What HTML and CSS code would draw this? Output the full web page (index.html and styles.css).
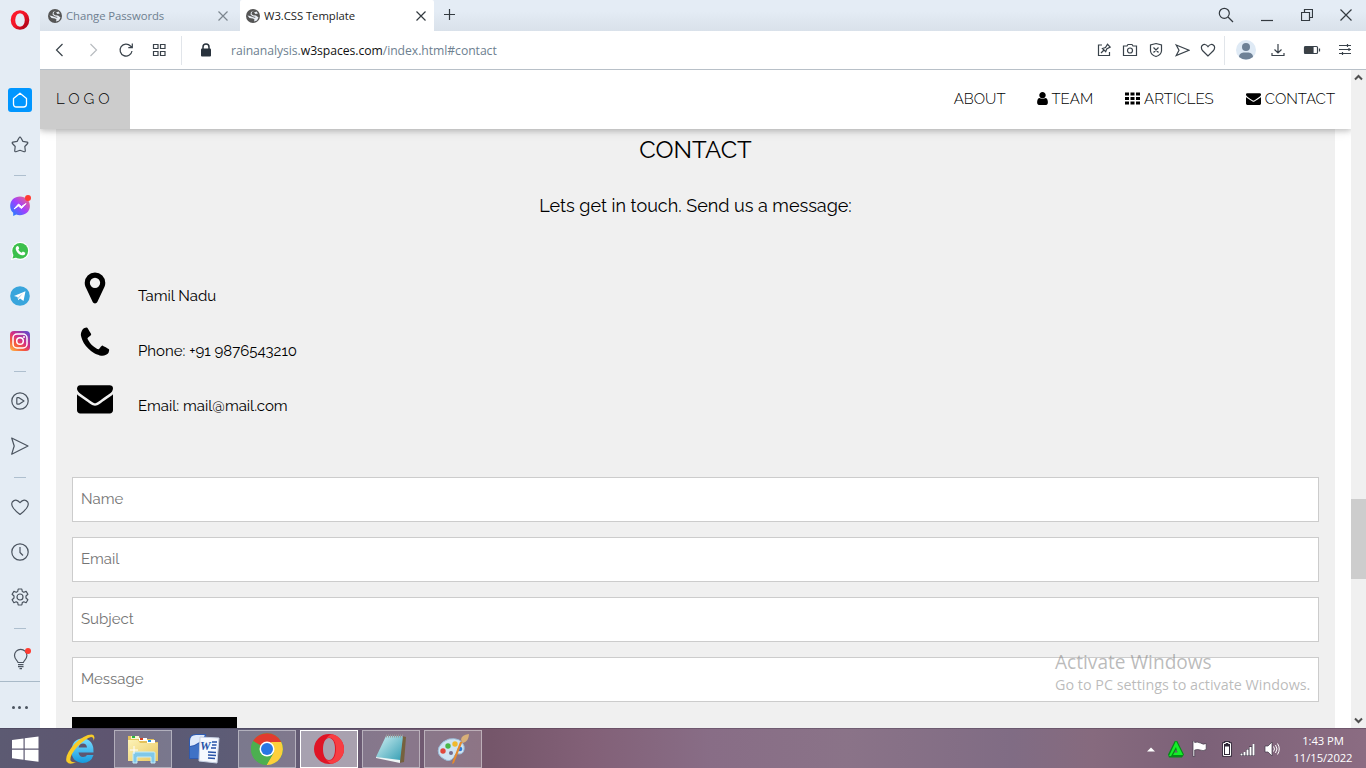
FILE: index.html
```html
<!DOCTYPE html>
<html lang="en">
<head>
<meta charset="utf-8">
<title>W3.CSS Template</title>
<link rel="stylesheet" href="styles.css">
</head>
<body>
<svg class="defs" width="0" height="0">
  <defs>
    <linearGradient id="opera" x1="0" x2="1" y1="0" y2="1"><stop offset="0" stop-color="#ff1b2d"/><stop offset=".5" stop-color="#f01426"/><stop offset="1" stop-color="#a70014"/></linearGradient>
    <linearGradient id="msg" x1="0" x2="1" y1="1" y2="0"><stop offset="0" stop-color="#0a8cff"/><stop offset=".5" stop-color="#a040ff"/><stop offset="1" stop-color="#ff6a70"/></linearGradient>
    <linearGradient id="insta" x1="0" x2=".8" y1="1" y2="0"><stop offset="0" stop-color="#ffc14a"/><stop offset=".35" stop-color="#f65a3c"/><stop offset=".6" stop-color="#d42e84"/><stop offset="1" stop-color="#6a48c8"/></linearGradient>
    <linearGradient id="ie" x1="0" x2="0" y1="0" y2="1"><stop offset="0" stop-color="#7bdcff"/><stop offset="1" stop-color="#149ade"/></linearGradient>
    <linearGradient id="folder" x1="0" x2="1" y1="0" y2="1"><stop offset="0" stop-color="#fdf3b8"/><stop offset="1" stop-color="#e9c860"/></linearGradient>
    <linearGradient id="note" x1="0" x2="1" y1="0" y2="1"><stop offset="0" stop-color="#d3f2f4"/><stop offset="1" stop-color="#2e9ab0"/></linearGradient>
    <symbol id="globe" viewBox="0 0 14 14"><circle cx="7" cy="7" r="7" fill="#555"/><path d="M8.500 1.500 6 3 5.500 5 7 6.300 10 6.500 12.500 8.500 11 11.500 8 12.500 8.500 10.500 7 9.500 3.500 9 1.500 6.500 4 7 6.500 8 9 8.800 9.500 8 6.500 7.200 4.500 5.500 5 3Z" fill="#e8edf4"/><path d="M8 3.500 10.500 2.500 12 4.500 9.500 5Z" fill="#e8edf4"/></symbol>
    <symbol id="envelope" viewBox="0 0 1792 1792"><path d="M1792 710v794q0 66-47 113t-113 47h-1472q-66 0-113-47t-47-113v-794q44 49 101 87 362 246 497 345 57 42 92.500 65.500t94.500 48 110 24.500h2q51 0 110-24.500t94.500-48 92.500-65.500q170-123 498-345 57-39 100-87zm0-294q0 79-49 151t-122 123q-376 261-468 325-10 7-42.500 31t-54 38.500-52 32.500-57.500 27-50 9h-2q-23 0-50-9t-57.500-27-52-32.500-54-38.500-42.500-31q-91-64-262-182.500t-205-142.500q-62-42-117-115.500t-55-136.500q0-78 41.500-130t118.500-52h1472q65 0 112.500 47t47.500 113z"/></symbol>
  </defs>
</svg>
<div class="desktop">
  <div class="browser">
    <aside class="sidebar">
      <div class="brand"><svg width="20" height="20"><ellipse cx="10" cy="10" rx="7.800" ry="8.300" fill="none" stroke="url(#opera)" stroke-width="3"/><ellipse cx="10" cy="10" rx="5.800" ry="8" fill="none" stroke="url(#opera)" stroke-width="2"/></svg></div>
      <div class="item first"><span class="home"><svg width="24" height="24" fill="none" stroke="#fff" stroke-width="1.300" stroke-linejoin="round"><path d="M5.500 10.500 12 5.200l6.500 5.300V16q0 3-3 3h-7q-3 0-3-3Z"/></svg></span></div>
      <div class="item"><svg class="line" width="20" height="20"><path d="M10 2.200q.6 0 .9.600l2 3.600 4.200.8q1.200.3.500 1.300l-2.800 3 .5 4.300q0 1.200-1.200.9L10 15.300l-4.100 1.400q-1.200.3-1.200-.9l.5-4.300-2.800-3q-.7-1 .5-1.300l4.200-.8 2-3.600q.3-.6.9-.6Z"/></svg></div>
      <div class="rule short"></div>
      <div class="item"><svg width="22" height="22"><path d="M11 1.500C5.500 1.500 1.200 5.300 1.200 11c0 3 1.200 5.200 3 6.800V21l3-1.400c6.500 2 13.700-1.600 13.700-8.600 0-5.700-4.400-9.500-9.900-9.500Z" fill="url(#msg)"/><path d="m5 14 4.500-5 3 2.500L17 8.500l-4.500 5-3-2.500Z" fill="#fff" stroke="#fff"/></svg><i class="dot"></i></div>
      <div class="item"><svg width="20" height="20"><path d="M.8 19.200l1.600-5A9 9 0 1 1 6 17.800Z" fill="#fff"/><circle cx="10.200" cy="9.800" r="7.900" fill="#3cc04c"/><path d="M2.500 17.500l1.500-5 3.500 3.700Z" fill="#3cc04c"/><path d="M6.500 5.500q1.500-1.300 2.200.5l.5 1.500-.9 1.300q1.200 2.200 3.300 3l1.300-1.300 2.400 1.200q.4 2.200-2 2.600C9.500 14.500 5.400 10.500 5.700 7Z" fill="#fff"/></svg></div>
      <div class="item"><svg width="20" height="20"><circle cx="10" cy="10" r="9.800" fill="#38a5dc"/><path d="m4 10 11.500-4.700L13.500 15 10 12.600 8.200 14.300 7.500 11Z" fill="#fff"/><path d="m8 11.500 5-4.200-4 4.700-.6 1.800Z" fill="#a8c8dc"/></svg></div>
      <div class="item"><svg width="20" height="20"><rect width="20" height="20" rx="4" fill="url(#insta)"/><g fill="none" stroke="#fff" stroke-width="1.500"><rect x="3" y="3" width="14" height="14" rx="4"/><circle cx="10" cy="10" r="3.300"/></g><circle cx="14" cy="6" r="1" fill="#fff"/></svg></div>
      <div class="rule"></div>
      <div class="item"><svg class="line" width="20" height="20"><circle cx="10" cy="10" r="8.200"/><path d="M7.500 6.700H9L14 10l-5 3.200H7.500q-.7 0-.7-.7V7.400q0-.7.7-.7Z"/></svg></div>
      <div class="item"><svg class="line" width="20" height="20"><path d="M1.700 2 18 10 1.700 18.200 4.200 10Z"/></svg></div>
      <div class="rule"></div>
      <div class="item"><svg class="line" width="20" height="20"><path d="M10 17.400C8 16 5 13.500 3.300 11Q.8 7.500 2.300 5 5.700.8 10 5.700q4.300-4.900 7.700-.7 1.500 2.500-1 6C15 13.500 12 16 10 17.400Z"/></svg></div>
      <div class="item"><svg class="line" width="20" height="20"><circle cx="10" cy="10" r="8.200"/><path d="M10 5v5.500l3 3"/></svg></div>
      <div class="item"><svg class="line" width="20" height="20"><path d="M8.200 2h3.600l.5 2.500 1.500.8 2.300-.9L17.900 7.300 16 9v2l1.900 1.700-1.800 3-2.300-.9-1.500.8-.5 2.400H8.200l-.5-2.400-1.500-.8-2.300.9-1.800-3L4 11V9L2.100 7.300l1.800-2.900 2.300.9 1.500-.8Z"/><circle cx="10" cy="10" r="3"/></svg></div>
      <div class="rule"></div>
      <div class="item"><svg class="line bulb" width="20" height="22"><path d="M8 14.500C7.900 12.500 4.500 11.500 4.500 7.500a6.200 6.200 0 0 1 12.400 0c0 4-3.300 5-3.500 7ZM8 16.700h5.500M8 18.700h5.500M9.500 20.700h2.500"/></svg><i class="dot"></i></div>
      <div class="more"><i></i><i></i><i></i></div>
    </aside>

    <div class="window">
      <div class="tabs">
        <div class="tab"><svg width="14" height="14"><use href="#globe"/></svg><span>Change Passwords</span><svg class="close" width="10" height="10"><path d="m.5.500 9 9m0-9-9 9"/></svg></div>
        <div class="tab active"><svg width="14" height="14"><use href="#globe"/></svg><span>W3.CSS Template</span><svg class="close" width="10" height="10"><path d="m.5.500 9 9m0-9-9 9"/></svg></div>
        <svg class="plus" width="11" height="11"><path d="M5.500 0v11M0 5.500h11"/></svg>
        <div class="controls">
          <svg width="16" height="16"><circle cx="6.300" cy="6.300" r="5"/><path d="m10 10 5 5"/></svg>
          <svg width="12" height="14"><path d="M0 12.500h12"/></svg>
          <svg width="12" height="12"><path d="M.5 3.500h8v8h-8ZM3.500 3.500v-3h8v8h-3"/></svg>
          <svg width="12" height="12"><path d="m.5.500 11 11m0-11-11 11"/></svg>
        </div>
      </div>
      <div class="toolbar">
        <div class="navs">
          <svg width="16" height="16"><path d="m10.500 2-6 6 6 6"/></svg>
          <svg class="dim" width="16" height="16"><path d="m5.500 2 6 6-6 6"/></svg>
          <svg width="16" height="16"><path d="M14 9A6 6 0 1 1 12.500 4L14 5.500M14.300 1.500v4.200h-4"/></svg>
          <svg width="16" height="16"><path d="M2.500 2.500H7v4H2.500ZM9.500 2.500H14v4H9.500ZM2.500 9.500H7v4H2.500ZM9.500 9.500H14v4H9.500Z"/></svg>
        </div>
        <svg class="lock" width="12" height="14"><rect x="1" y="5.500" width="10" height="8" rx="1" fill="#28323c"/><path d="M3 6V4a3 3 0 0 1 6 0v2" fill="none" stroke="#28323c" stroke-width="1.500"/></svg>
        <div class="url">rainanalysis.<b>w3spaces.com</b>/index.html#contact</div>
        <div class="actions">
          <svg width="16" height="16"><path d="M6 3H2.500v10.500h11V10M5 11l3-3M6.500 6.500l3.200 3.200 1-2.700 3.500-2-2.700-2.700-2 3.300Z"/></svg>
          <svg width="16" height="16"><path d="M1.500 4H5l1-1.500h4L11 4h3.500v9.500h-13Z"/><circle cx="8" cy="8.500" r="2.500"/></svg>
          <svg width="16" height="16"><path d="M8 1.500 13.500 3v6Q13 13 8 14.500 3 13 2.500 9V3ZM5.500 5.500l5 5m0-5-5 5"/></svg>
          <svg width="16" height="16"><path d="M2.200 3 15 8.200 2.200 13.500 5 8.200Z"/></svg>
          <svg width="16" height="16"><path d="M8 14 2.700 8.800Q.5 6 2 3.700 5 .8 8 4.700q3-3.900 6-1 1.500 2.300-.7 5.100Z"/></svg>
        </div>
        <svg class="avatar" width="20" height="20"><circle cx="10" cy="10" r="10" fill="#dfeaf5"/><circle cx="10" cy="7" r="4" fill="#6e8196"/><path d="M3 17q0-4 4.500-4.500h5Q17 13 17 17q-7 5-14 0Z" fill="#6e8196"/></svg>
        <div class="tools">
          <svg width="16" height="16"><path d="M8 2v8.500M4.500 7.500 8 11l3.500-3.500M2 11v2.500h12V11"/></svg>
          <svg width="18" height="16"><rect x="1.500" y="4.500" width="13" height="7" rx="1"/><path d="M2 5h8v6H2Z" fill="#3c4043"/><path d="M16.500 6.500v3"/></svg>
          <svg width="14" height="14"><path d="M1 2.500h12M1 6.500h12M1 10.500h12M9.500 1v3M11 5v3M4.500 9v3"/></svg>
        </div>
      </div>

      <div class="viewport">
        <div class="page">
          <nav class="topbar">
            <a class="logo">LOGO</a>
            <div class="links">
              <a>ABOUT</a>
              <a><svg class="fa" width="11" height="15" viewBox="256 0 1280 1792"><path d="M1536 1399q0 109-62.500 187t-150.500 78h-854q-88 0-150.500-78t-62.500-187q0-85 8.500-160.500t31.500-152 58.500-131 94-89 134.500-34.500q131 128 313 128t313-128q76 0 134.500 34.500t94 89 58.500 131 31.500 152 8.500 160.500zm-256-887q0 159-112.500 271.500t-271.500 112.500-271.500-112.500-112.500-271.500 112.500-271.500 271.500-112.500 271.500 112.500 112.500 271.500z"/></svg><span>TEAM</span></a>
              <a><svg class="fa" width="15" height="15"><path d="M0 1.500h4v3H0ZM5.500 1.500h4v3h-4ZM11 1.500h4v3h-4ZM0 6h4v3H0ZM5.500 6h4v3h-4ZM11 6h4v3h-4ZM0 10.500h4v3H0ZM5.500 10.500h4v3h-4ZM11 10.500h4v3h-4Z"/></svg><span>ARTICLES</span></a>
              <a><svg class="fa" width="15" height="15"><use href="#envelope"/></svg><span>CONTACT</span></a>
            </div>
          </nav>
          <section class="contact">
            <h3>CONTACT</h3>
            <p class="lead">Lets get in touch. Send us a message:</p>
            <div class="info">
              <p><svg width="36" height="36" viewBox="0 0 1792 1792"><path d="M1152 640q0-106-75-181t-181-75-181 75-75 181 75 181 181 75 181-75 75-181zm256 0q0 109-33 179l-364 774q-16 33-47.500 52t-67.500 19-67.500-19-46.500-52l-365-774q-33-70-33-179 0-212 150-362t362-150 362 150 150 362z"/></svg><span>Tamil Nadu</span></p>
              <p><svg width="36" height="36" viewBox="0 0 1792 1792"><path d="M1600 1240q0 27-10 70.500t-21 68.500q-21 50-122 106-94 51-186 51-27 0-52.500-3.500t-57.500-12.500-47.500-14.500-55.500-20.500-49-18q-98-35-175-83-128-79-264.500-215.500t-215.500-264.500q-48-77-83-175-3-9-18-49t-20.500-55.500-14.500-47.500-12.500-57.500-3.500-52.500q0-92 51-186 56-101 106-122 25-11 68.500-21t70.500-10q14 0 21 3 18 6 53 76 11 19 30 54t35 63.500 31 53.500q3 4 17.500 25t21.500 35.500 7 28.500q0 20-28.500 50t-62 55-62 53-28.500 46q0 9 5 22.500t8.500 20.500 14 24 11.500 19q76 137 174 235t235 174q2 1 19 11.500t24 14 20.500 8.500 22.500 5q18 0 46-28.500t53-62 55-62 50-28.500q14 0 28.500 7t35.500 21.500 25 17.500q25 15 53.500 31t63.500 35 54 30q70 35 76 53 3 7 3 21z"/></svg><span>Phone: +91 9876543210</span></p>
              <p><svg width="36" height="36"><use href="#envelope"/></svg><span>Email: mail@mail.com</span></p>
            </div>
            <form class="form">
              <input placeholder="Name"><input placeholder="Email"><input placeholder="Subject"><input placeholder="Message">
              <div class="send"></div>
            </form>
          </section>
        </div>
        <div class="scrollbar">
          <svg width="9" height="7"><path d="M1 5.500 4.500 2 8 5.500"/></svg>
          <div class="thumb"></div>
          <svg width="9" height="7"><path d="M1 1.500 4.500 5 8 1.500"/></svg>
        </div>
      </div>
    </div>
  </div>

  <div class="taskbar">
    <div class="start"><svg width="28" height="28" fill="#fff"><path d="M1 5 12.500 3.500v10H1ZM13.700 3.300 27.500 1.500v12H13.700ZM1 14.700h11.500v10L1 23.200ZM13.700 14.700h13.800v12L13.700 25Z"/></svg></div>
    <div class="task plain"><svg width="32" height="32"><path d="M28.500 19.500H13.500q1 4.500 4.500 4.500 3 0 4-2h6.500Q26 30 17.500 30 6.500 29 6.500 17.500 7 6 17.500 5.500q11.500.5 11 14ZM13.500 14.500H22q-.5-4-4-4t-4.500 4Z" fill="url(#ie)"/><path d="M28.500 8Q31 2.500 27 1.500 19 1.500 9.500 11-.5 22 1.500 28.500q2.500 4 10 .5-5 1-6-1.500-1-5 7-14Q21 5 26 4q3 0 2.500 4Z" fill="#f8cc28"/></svg></div>
    <div class="task"><svg width="34" height="32"><path d="M2 3h11l1 3h14v3h4v19H2Z" fill="#e4c25a"/><path d="M5 3h8v3H5Z" fill="#f8f6d0"/><path d="M6 3h3v2H6Z" fill="#28b83c"/><path d="M13 5h8v3h-8Z" fill="#fff"/><path d="M14 5h3v2h-3Z" fill="#d84020"/><path d="M21 7h8v3h-8Z" fill="#fff"/><path d="M22 7h3v2h-3Z" fill="#2898e0"/><path d="M2 7h10l2 3h18v18H2Z" fill="url(#folder)"/><path d="M7 30V20q0-1 1-1h20q1 0 1 1v10h-4v-6H11v6Z" fill="#80c8e8" stroke="#c4ecfa"/><path d="M8 13v8M4 17h8" stroke="#fff"/></svg></div>
    <div class="task plain word-task"><svg width="32" height="32"><path d="M1 8q0-7 7-7h10v25H1Z" fill="#2f5bb0"/><path d="M2 8q0-6 6-6h9q-4 9-15 11Z" fill="#dfeafb"/><path d="M2 14q12-2 15-12v23H2Z" fill="#3f72c6"/><path d="m12 4 19 1-2 25-18-2Z" fill="#f6f9ff" stroke="#c5cfe2"/><text class="word" x="12" y="17">W</text><path d="M24 9h5M24 12h4.500M23 15h5M20 19l8 .5M20 22l8 .5M20 25l7 .5" stroke="#2853a8" stroke-width="1.500"/></svg></div>
    <div class="task"><svg width="32" height="32"><circle cx="16" cy="16" r="16" fill="#4caf50"/><path d="M16 16 2.200 8A16 16 0 0 1 30 8.500V10H16Z" fill="#e23b2e"/><path d="M30 8.500A16 16 0 0 1 15.500 32L23 19l-3-10h10Z" fill="#fdd03b"/><path d="M2.200 8 9 20l7 3 6-2-6.500 11A16 16 0 0 1 2.200 8Z" fill="#4caf50"/><circle cx="16" cy="16" r="7.500" fill="#fff"/><circle cx="16" cy="16" r="6" fill="#2876e4"/></svg></div>
    <div class="task current"><svg width="32" height="32"><path fill-rule="evenodd" d="M16 1a15 15 0 1 0 0 30 15 15 0 1 0 0-30Zm0 4c4 0 6 5 6 11s-2 11-6 11-6-5-6-11 2-11 6-11Z" fill="#df1426"/><path d="M19 1.300a15 15 0 0 1 0 29.400q-3-.3-6-4 6 3 9-4 2-7 0-13-3-7-9-4 3-4 6-4.400Z" fill="#f83d42"/></svg></div>
    <div class="task"><svg width="32" height="32"><path d="m27 3 4 1-2 25-5 1Z" fill="#76613e"/><path d="M11 3h17l-3 26L1 24Z" fill="url(#note)"/><path d="M1 24l24 3v3L1 25Z" fill="#eef6f6"/><path d="M11 3h17" stroke="#999" stroke-width="3" stroke-dasharray="1 1"/></svg></div>
    <div class="task"><svg width="32" height="32"><path d="M12 6q12-2 15 7 1 7-4 8-5-1-6 3-4 6-10 2-8-4-5-12 3-6 10-8Z" fill="#cfe4f2" stroke="#9bbcd8"/><circle cx="6" cy="18" r="2.700" fill="#e0483c"/><circle cx="11" cy="13" r="2.700" fill="#49b748"/><circle cx="18" cy="11" r="2.700" fill="#f0b92c"/><circle cx="23" cy="16" r="2.300" fill="#2c7ad8"/><circle cx="14" cy="20" r="2" fill="#766d8d"/><path d="m27 8-2 2-8 20-2 1 1-4 7-18Z" fill="#e48a2e"/><path d="M24 7q0-5 8-6 0 7-6 9Z" fill="#d9b078"/></svg></div>
    <div class="tray">
      <svg class="chev" width="8" height="5"><path d="M0 4.500 4 .5l4 4Z" fill="#fff"/></svg>
      <svg width="16" height="17"><path d="m7-.5 2 0 7 14-2 3H1l-1-3Z" fill="#078a19"/><path d="M8 0 15 14H5l3-5 1.500 2.500L8 6 3 15H1Z" fill="#14ef28"/><path d="M8 8.500 9.500 11.500h-3Z" fill="#6f5a70"/></svg>
      <svg class="flag" width="16" height="16"><path d="M1 0v15.500h1.700V9q3-1 5.500 0 3 1.500 6-.5V2.500Q11 4 8.500 2 5 .5 2.700 1.500V0Z" fill="#fff" stroke="#403848" stroke-width=".7"/></svg>
      <svg class="bat" width="10" height="16"><path d="M3.500 1h3v1.500h2v12h-7v-12h2Z" fill="none" stroke="#302838" stroke-width="2.600"/><path d="M3.500 1.500h3v1h2v12h-7v-12h2Z" fill="#302838" stroke="#fff"/><path d="M3 5.500h4V13H3Z" fill="#fff"/></svg>
      <svg class="sig" width="16" height="14"><path d="M1.500 14v-3M4.500 14v-4M7.500 14V7M10.500 14V4.500M13.500 14V2" stroke="#382e40" stroke-width="3"/><path d="M1.500 13.500V11.500M4.500 13.500V10M7.500 13.500V7.500M10.500 13.500V5M13.500 13.500V2" stroke="#fff" stroke-width="2"/></svg>
      <svg class="vol" width="16" height="16"><path d="M1 5h3l4-4v14l-4-4H1Z" fill="#fff" stroke="#403848" stroke-width=".7"/><path d="M9.500 5.500q2 2.500 0 5M11.500 4q3 4 0 8M13.500 2.500q3.500 5.500 0 11" fill="none" stroke="#fff"/></svg>
      <div class="clock"><span>1:43 PM</span><span>11/15/2022</span></div>
    </div>
  </div>
  <div class="watermark"><div class="wm-title">Activate Windows</div><div class="wm-sub">Go to PC settings to activate Windows.</div></div>
</div>
</body>
</html>
```
FILE: styles.css
```css
* { box-sizing: border-box; }
body { margin: 0; overflow: hidden; font-family: "Open Sans", "Noto Sans", sans-serif; }
svg { display: block; flex: none; }
.defs { position: absolute; }
.desktop { position: relative; width: 1366px; height: 768px; display: flex; flex-direction: column; }
.browser { display: flex; height: 728px; }

.sidebar { width: 40px; background: #e4ecf4; display: flex; flex-direction: column; }
.brand { height: 78px; padding: 10px; }
.item { position: relative; height: 45px; display: flex; align-items: center; justify-content: center; }
.item.first { padding-bottom: 1px; }
.home { width: 24px; height: 24px; border-radius: 3px; background: #0096ff; }
.line { fill: none; stroke: #4b545f; stroke-width: 1.2; stroke-linejoin: round; margin: 0 1px 1px 0; }
.bulb { margin-bottom: 0; }
.rule { height: 16px; display: flex; align-items: center; justify-content: center; }
.rule.short { height: 15px; }
.rule::before { content: ""; width: 12px; height: 1px; background: #aebfce; }
.dot { position: absolute; left: 25px; top: 12px; width: 6px; height: 6px; border-radius: 50%; background: #ff3b30; }
.more { flex: 1; border-top: 1px solid #a9bac8; display: flex; justify-content: center; align-items: center; gap: 3.500px; padding: 5px 1px 0 0; }
.more i { width: 3px; height: 3px; border-radius: 50%; background: #4b545f; }

.window { flex: 1; display: flex; flex-direction: column; background: #e4ecf4; }
.tabs { height: 31px; display: flex; align-items: center; background: linear-gradient(#e4ecf5 35%, #d9e1ea); }
.tab { width: 200px; height: 31px; display: flex; align-items: center; padding: 0 12.5px 0 8px; gap: 4px; font-size: 11.3px; letter-spacing: -.05px; color: #6e7f90; }
.tab.active { width: 194px; padding-left: 6px; padding-right: 8.5px; background: #fff; color: #222; border-radius: 2px 2px 0 0; }
.tab span { flex: 1; white-space: nowrap; }
.close, .plus, .controls svg { fill: none; stroke: #333a40; stroke-width: 1.2; }
.tab:first-child .close { stroke: #7c868f; }
.plus { margin-left: 10px; margin-top: -2px; }
.controls { margin-left: auto; display: flex; align-items: center; gap: 27.5px; padding: 0 14px 2px 0; }
.toolbar { height: 39px; background: #fff; border-bottom: 1px solid #b8c0c8; display: flex; align-items: center; }
.navs { display: flex; gap: 17px; padding: 0 14px 0 12px; border-right: 1px solid #e1e5ea; height: 29px; align-items: center; }
.toolbar svg { fill: none; stroke: #39424a; stroke-width: 1.2; }
.toolbar .dim { stroke: #b8bcc0; }
.toolbar .lock, .toolbar .avatar { stroke: none; }
.lock { margin-left: 18px; }
.url { margin-left: 19px; font-size: 12.2px; letter-spacing: -.05px; color: #6e7f90; white-space: nowrap; }
.url b { font-weight: 400; color: #111; }
.actions { margin-left: auto; display: flex; gap: 10px; height: 29px; align-items: center; padding-right: 8px; border-right: 1px solid #e1e5ea; }
.avatar { margin-left: 11px; }
.tools { display: flex; align-items: center; gap: 17px; padding: 0 14px; }

.viewport { height: 658px; display: flex; overflow: hidden; }
.page { flex: 1; background: #fff; font-family: Raleway, Lato, sans-serif; font-weight: 400; color: #000; display: flex; flex-direction: column; }
.topbar { position: relative; z-index: 1; height: 59px; flex: none; display: flex; justify-content: space-between; background: #fff; font-size: 15px; font-weight: 300; box-shadow: 0 2px 5px rgba(0,0,0,.16), 0 2px 10px rgba(0,0,0,.12); clip-path: inset(0 0 -14px 0); }
.logo { width: 90px; background: #ccc; padding: 20px 0 0 16px; letter-spacing: 4px; }
.links { display: flex; }
.links a { display: flex; gap: 4px; padding: 20px 16px 0; height: 40px; }
.links a:first-child { padding-right: 15px; }
.fa { margin-top: 1px; }
.contact { flex: 1; margin: 0 16px; background: #f0f0f0; padding: 0 16px; overflow: hidden; }
.contact h3 { margin: 3px 0 0; font-size: 24px; line-height: 36px; font-weight: 400; text-align: center; }
.lead { margin: 24px 0 0; font-size: 18px; line-height: 27px; text-align: center; }
.info { padding: 51px 0 0 5px; font-size: 15px; }
.info p { margin: 0; height: 55px; display: flex; gap: 25px; }
.info span { padding-top: 16px; line-height: 20px; }
.form { padding-top: 42px; display: flex; flex-direction: column; gap: 15px; }
.form input { height: 45px; flex: none; border: 1px solid #ccc; background: #fff; padding: 0 8px 2px; font: 400 15px Raleway, Lato, sans-serif; }
.form input::placeholder { color: #757575; }
.send { width: 165px; height: 40px; flex: none; background: #000; }
.scrollbar { width: 15px; background: #f0f0f0; display: flex; flex-direction: column; align-items: center; padding-top: 4px; }
.scrollbar svg { fill: none; stroke: #505050; stroke-width: 2; }
.thumb { width: 15px; height: 80px; background: #cdcdcd; margin-top: 418px; margin-bottom: 138px; }

.taskbar { height: 40px; display: flex; align-items: center; border-top: 1px solid rgba(40,30,50,.25); background: linear-gradient(90deg, #5c5a72, #5e5570 8%, #5b5c76 15%, #6f5a72 30%, #75566a 36%, #826077 43%, #886d86 52%, #8a7388 62%, #806c84 74%, #866a7e 80%, #7c6178 88%, #8b6c82); }
.start { width: 52px; padding-left: 11px; }
.task { width: 58px; height: 38px; margin-right: 4px; display: flex; align-items: center; justify-content: center; background: rgba(255,255,255,.18); border: 1px solid rgba(255,255,255,.42); }
.task.plain { background: none; border-color: transparent; }
.word-task { padding-right: 2px; }
.task.current { background: rgba(255,255,255,.43); border-color: #fff; }
.word { font: italic bold 12px "Liberation Serif", serif; fill: #2853a8; }
.tray { margin-left: auto; display: flex; align-items: center; color: #fff; padding-right: 6px; padding-top: 1px; }
.chev { margin-right: 13px; }
.flag { margin-left: 8px; }
.bat { margin-left: 14px; }
.sig { margin-left: 8px; }
.vol { margin-left: 8px; }
.clock { width: 74px; margin-left: 6px; display: flex; flex-direction: column; align-items: center; font-size: 11.3px; line-height: 17px; letter-spacing: -.1px; }
.watermark { position: absolute; left: 1055px; top: 650px; color: rgba(120,120,120,.5); white-space: nowrap; }
.wm-title { font-size: 19.1px; line-height: 25px; }
.wm-sub { font-size: 14.35px; line-height: 20px; }
```
